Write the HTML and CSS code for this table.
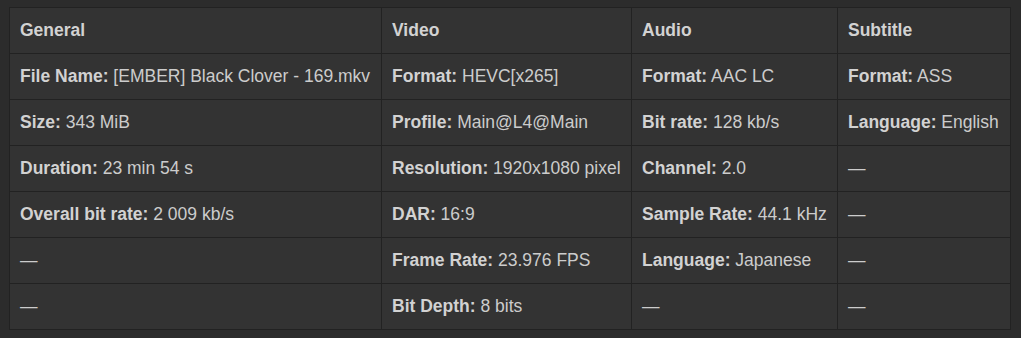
FILE: index.html
```html
<!DOCTYPE html>
<html>
<head>
<meta charset="utf-8">
<link rel="stylesheet" href="styles.css">
</head>
<body>
<table class="info">
  <colgroup>
    <col class="c1"><col class="c2"><col class="c3"><col class="c4">
  </colgroup>
  <thead>
    <tr><th>General</th><th>Video</th><th>Audio</th><th>Subtitle</th></tr>
  </thead>
  <tbody>
    <tr>
      <td><b>File Name:</b> [EMBER] Black Clover - 169.mkv</td>
      <td><b>Format:</b> HEVC[x265]</td>
      <td><b>Format:</b> AAC LC</td>
      <td><b>Format:</b> ASS</td>
    </tr>
    <tr>
      <td><b>Size:</b> 343 MiB</td>
      <td><b>Profile:</b> Main@L4@Main</td>
      <td><b>Bit rate:</b> 128 kb/s</td>
      <td><b>Language:</b> English</td>
    </tr>
    <tr>
      <td><b>Duration:</b> 23 min 54 s</td>
      <td><b>Resolution:</b> 1920x1080 pixel</td>
      <td><b>Channel:</b> 2.0</td>
      <td>—</td>
    </tr>
    <tr>
      <td><b>Overall bit rate:</b> 2 009 kb/s</td>
      <td><b>DAR:</b> 16:9</td>
      <td><b>Sample Rate:</b> 44.1 kHz</td>
      <td>—</td>
    </tr>
    <tr>
      <td>—</td>
      <td><b>Frame Rate:</b> 23.976 FPS</td>
      <td><b>Language:</b> Japanese</td>
      <td>—</td>
    </tr>
    <tr>
      <td>—</td>
      <td><b>Bit Depth:</b> 8 bits</td>
      <td>—</td>
      <td>—</td>
    </tr>
  </tbody>
</table>
</body>
</html>
```
FILE: styles.css
```css
html, body {
  margin: 0;
  padding: 0;
  background: #2c2c2c;
}
body {
  padding: 7px 0 0 9px;
  font-family: Arial, "Liberation Sans", sans-serif;
  font-size: 17.5px;
  color: #cccccc;
}
.info {
  border-collapse: collapse;
  table-layout: fixed;
  width: 1001px;
  background: #333333;
  border: 1px solid #222222;
}
.c1 { width: 372px; }
.c2 { width: 250px; }
.c3 { width: 206px; }
.c4 { width: 173px; }
.info th, .info td {
  border: 1px solid #222222;
  padding: 11px 10px;
  line-height: 23px;
  text-align: left;
  vertical-align: top;
  white-space: nowrap;
}
.info th, .info b {
  font-weight: bold;
  color: #d2d2d2;
}
```
